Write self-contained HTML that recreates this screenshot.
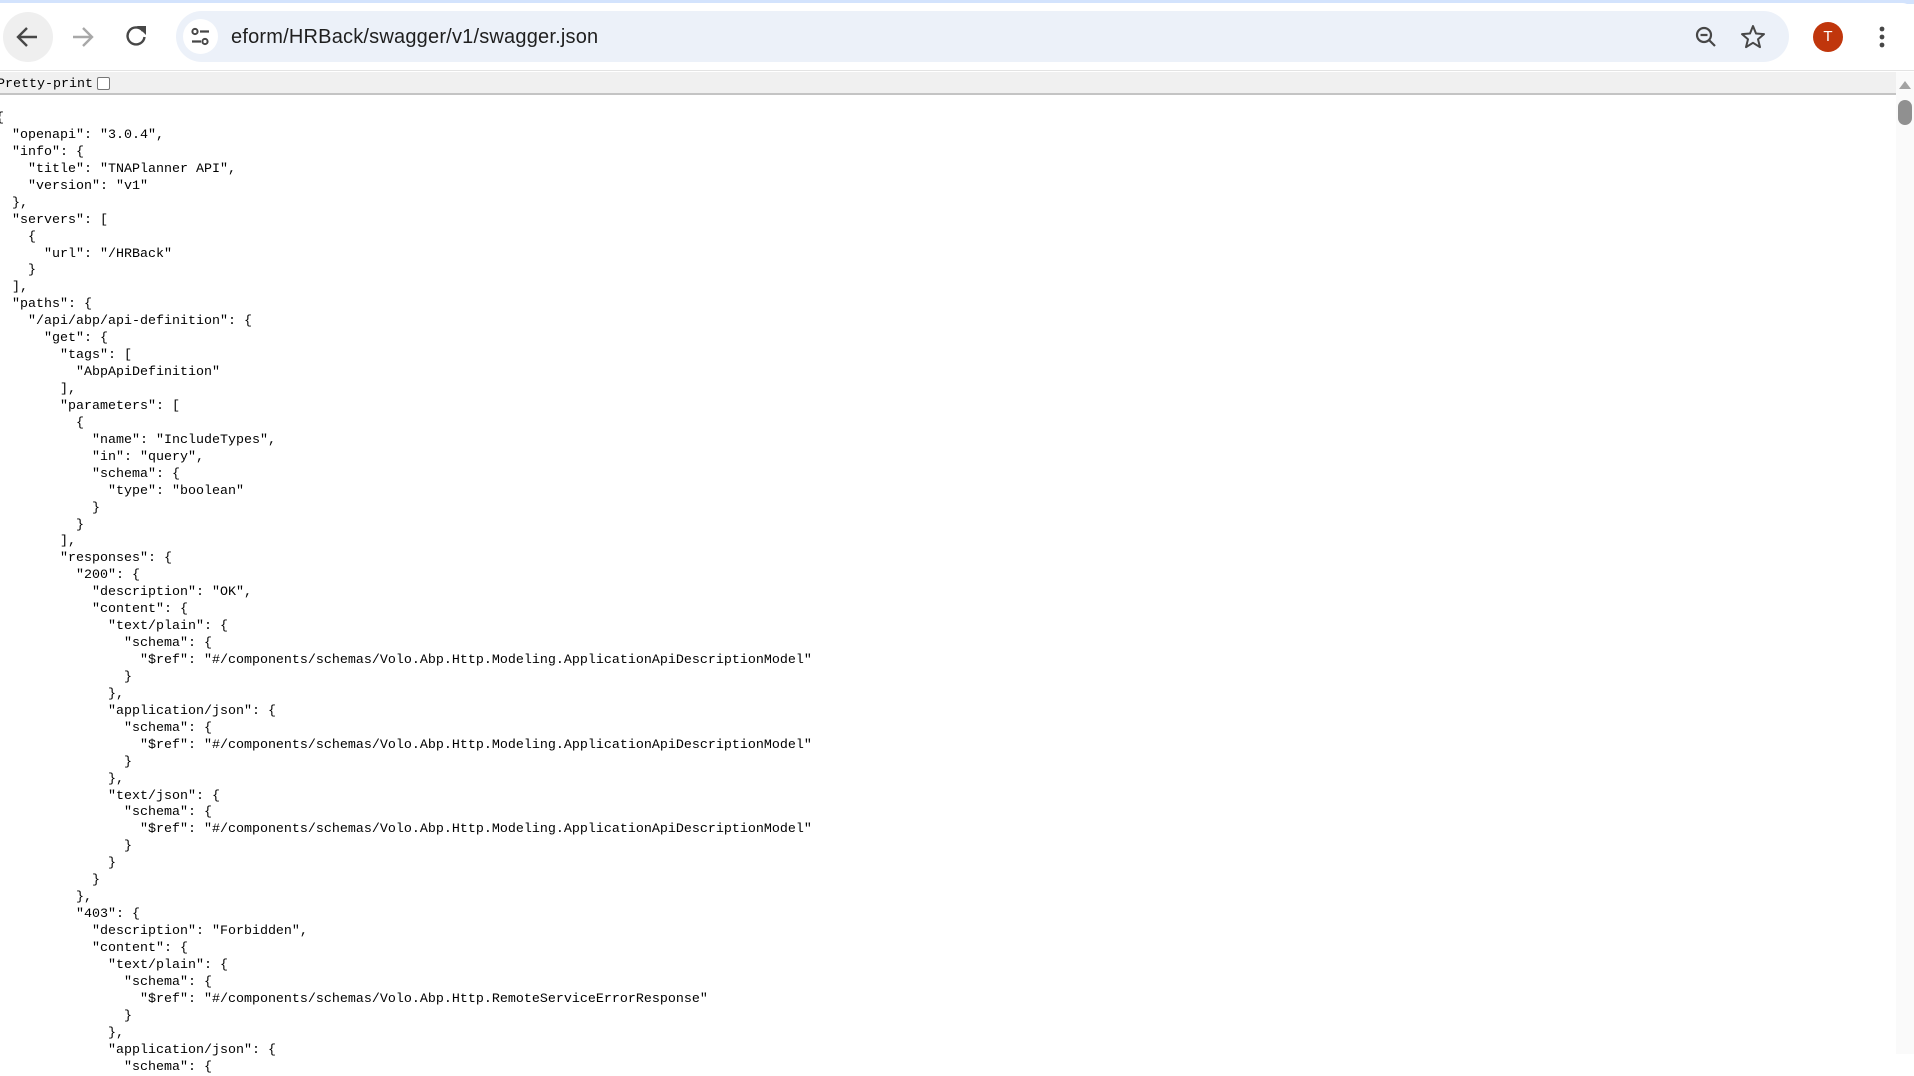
<!DOCTYPE html>
<html><head><meta charset="utf-8"><style>
*{box-sizing:border-box}
body{margin:0;width:1914px;height:1054px;overflow:hidden;background:#fff;position:relative;font-family:"Liberation Sans",sans-serif}
.top{position:absolute;left:0;top:0;width:1914px;height:4px;background:#d3e3fd}
.tb{position:absolute;left:0;top:3px;width:1914px;height:68px;background:#fff;border-radius:0 12px 0 0;border-bottom:1px solid #e3e3e3}
.back{position:absolute;left:3px;top:12px;width:50px;height:50px;border-radius:50%;background:#efefef}
.omni{position:absolute;left:176px;top:11px;width:1613px;height:51px;border-radius:26px;background:#ecf1f9}
.tune{position:absolute;left:183px;top:19px;width:35px;height:35px;border-radius:50%;background:#fff}
.url{position:absolute;left:231px;top:26px;font-size:20px;color:#1f1f1f;letter-spacing:.2px}
.av{position:absolute;left:1813px;top:22px;width:30px;height:30px;border-radius:50%;background:#c0360c;color:#fff;font-size:15px;text-align:center;line-height:30px}
.pp{position:absolute;left:0;top:72px;width:1896px;height:23px;background:#f0f0f0;border-bottom:2px solid #c4c4c4;font-family:"Liberation Mono",monospace;font-size:13.33px;line-height:22px}
.pp span{position:absolute;left:-3px;top:2px}
.cb{position:absolute;left:97px;top:5px;width:13px;height:13px;border:1px solid #767676;border-radius:2px;background:#fff}
.sb{position:absolute;left:1896px;top:72px;width:18px;height:982px;background:#fafafa}
.thumb{position:absolute;left:1898px;top:100px;width:14px;height:25px;border-radius:7px;background:#909090}
pre{position:absolute;left:-4px;top:111px;margin:0;font-family:"Liberation Mono",monospace;font-size:13.33px;line-height:16.93px;color:#000}
</style></head><body>
<div class="top"></div>
<div class="tb"></div>
<div class="back"></div>
<svg style="position:absolute;left:0;top:0" width="260" height="72">
<path d="M37 37H19M27 28l-9 9 9 9" stroke="#474747" stroke-width="2.4" fill="none"/>
<path d="M73 37h18M83 28l9 9-9 9" stroke="#a8a8a8" stroke-width="2.4" fill="none"/>
<path d="M143 31a8.5 8.5 0 1 0 1.5 6" stroke="#474747" stroke-width="2.4" fill="none"/><path d="M137 26h9v9z" fill="#474747"/>
</svg>
<div class="omni"></div>
<div class="tune"></div>
<svg style="position:absolute;left:183px;top:19px" width="35" height="35"><circle cx="12" cy="12.5" r="2.6" stroke="#474747" stroke-width="2" fill="none"/><path d="M17 12.5h9M9 22.5h9" stroke="#474747" stroke-width="2.2"/><circle cx="22" cy="22.5" r="2.6" stroke="#474747" stroke-width="2" fill="none"/></svg>
<div class="url">eform/HRBack/swagger/v1/swagger.json</div>
<svg style="position:absolute;left:1690px;top:22px" width="90" height="30">
<circle cx="14" cy="13" r="7" stroke="#474747" stroke-width="2.2" fill="none"/><path d="M10.5 13h7M19 18l6 6" stroke="#474747" stroke-width="2.2"/>
<path d="M63 4l3 7.5 8 .6-6 5.2 2 7.8-7-4.3-7 4.3 2-7.8-6-5.2 8-.6z" stroke="#474747" stroke-width="2" fill="none" stroke-linejoin="round"/>
</svg>
<div class="av">T</div>
<svg style="position:absolute;left:1875px;top:22px" width="14" height="30"><circle cx="7" cy="7" r="2.4" fill="#474747"/><circle cx="7" cy="15" r="2.4" fill="#474747"/><circle cx="7" cy="23" r="2.4" fill="#474747"/></svg>
<div class="pp"><span>Pretty-print</span><div class="cb"></div></div>
<div class="sb"></div>
<svg style="position:absolute;left:1897px;top:78px" width="16" height="12"><path d="M2 11L8 3l6 8z" fill="#a3a3a3"/></svg>
<div class="thumb"></div>
<pre>{
  "openapi": "3.0.4",
  "info": {
    "title": "TNAPlanner API",
    "version": "v1"
  },
  "servers": [
    {
      "url": "/HRBack"
    }
  ],
  "paths": {
    "/api/abp/api-definition": {
      "get": {
        "tags": [
          "AbpApiDefinition"
        ],
        "parameters": [
          {
            "name": "IncludeTypes",
            "in": "query",
            "schema": {
              "type": "boolean"
            }
          }
        ],
        "responses": {
          "200": {
            "description": "OK",
            "content": {
              "text/plain": {
                "schema": {
                  "$ref": "#/components/schemas/Volo.Abp.Http.Modeling.ApplicationApiDescriptionModel"
                }
              },
              "application/json": {
                "schema": {
                  "$ref": "#/components/schemas/Volo.Abp.Http.Modeling.ApplicationApiDescriptionModel"
                }
              },
              "text/json": {
                "schema": {
                  "$ref": "#/components/schemas/Volo.Abp.Http.Modeling.ApplicationApiDescriptionModel"
                }
              }
            }
          },
          "403": {
            "description": "Forbidden",
            "content": {
              "text/plain": {
                "schema": {
                  "$ref": "#/components/schemas/Volo.Abp.Http.RemoteServiceErrorResponse"
                }
              },
              "application/json": {
                "schema": {
</pre>
</body></html>
